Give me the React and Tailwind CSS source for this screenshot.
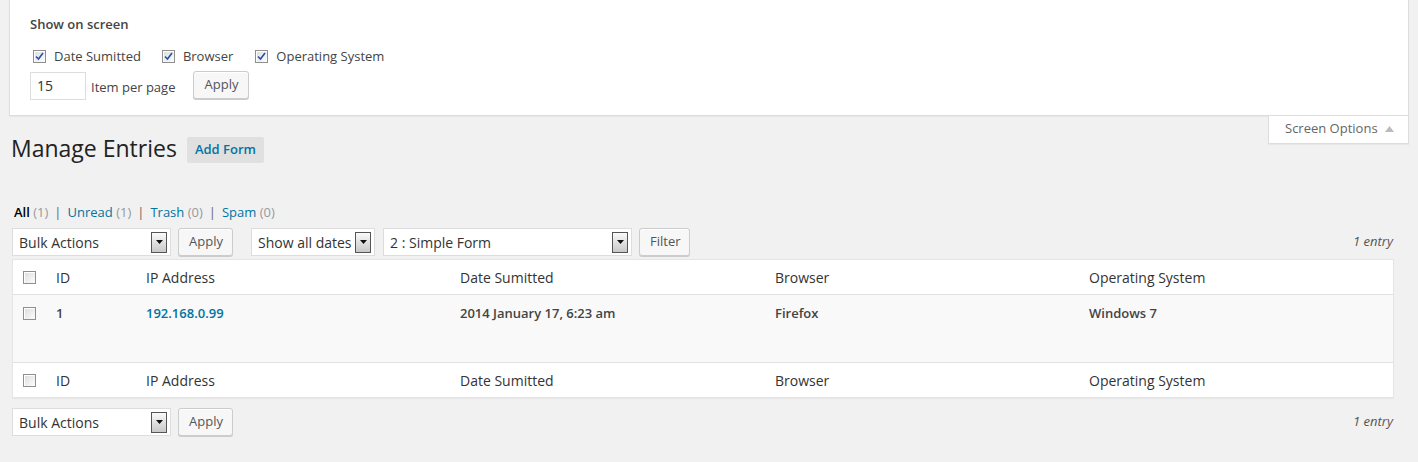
import React from "react";

function Checkbox({ checked }) {
  return (
    <span className="inline-flex h-[13px] w-[13px] shrink-0 items-center justify-center border border-[#8f8f8f] bg-gradient-to-br from-[#dcdcdc] to-[#fdfdfd] shadow-[inset_1px_1px_0_#fff]">
      {checked && (
        <svg width="9" height="9" viewBox="0 0 9 9">
          <path d="M1 4.5 L3.5 7 L8 1" fill="none" stroke="#2a4fa8" strokeWidth="1.6" />
        </svg>
      )}
    </span>
  );
}

function Select({ label, width }) {
  return (
    <div
      className={`flex h-[28px] items-center justify-between border border-[#ddd] bg-white pl-[6px] pr-[3px] text-[14px] text-[#333] ${width}`}
    >
      <span>{label}</span>
      <span className="flex h-[21px] w-[16px] items-center justify-center border border-[#555] bg-gradient-to-b from-[#fafafa] to-[#c8c8c8]">
        <svg width="7" height="4" viewBox="0 0 7 4">
          <path d="M0 0 H7 L3.5 4 Z" fill="#111" />
        </svg>
      </span>
    </div>
  );
}

function Button({ children, className = "" }) {
  return (
    <button
      className={`h-[28px] rounded-[3px] border border-[#ccc] bg-[#f7f7f7] px-[10px] text-[13px] text-[#555] shadow-[0_1px_0_#ccc,inset_0_1px_0_#fff] ${className}`}
    >
      {children}
    </button>
  );
}

function Tablenav({ filters }) {
  return (
    <div className="flex h-[28px] items-center">
      <Select label="Bulk Actions" width="w-[159px]" />
      <Button className="ml-[7px] w-[55px]">Apply</Button>
      {filters && (
        <>
          <Select label="Show all dates" width="ml-[18px] w-[124px]" />
          <Select label="2 : Simple Form" width="ml-[8px] w-[249px]" />
          <Button className="ml-[7px] w-[51px]">Filter</Button>
        </>
      )}
      <span className="ml-auto pr-[1px] text-[13px] italic text-[#555]">1 entry</span>
    </div>
  );
}

const cols = "grid grid-cols-[34px_90px_314px_315px_314px_1fr]";

function HeadRow({ border }) {
  return (
    <div className={`${cols} h-[35px] items-center text-[14px] text-[#333] ${border}`}>
      <div className="flex justify-center pr-[1px]">
        <Checkbox />
      </div>
      <div className="pl-[9px]">ID</div>
      <div className="pl-[9px]">IP Address</div>
      <div className="pl-[9px]">Date Sumitted</div>
      <div className="pl-[9px]">Browser</div>
      <div className="pl-[9px]">Operating System</div>
    </div>
  );
}

export default function App() {
  return (
    <div className="min-h-[462px] bg-[#f1f1f1] font-['Open_Sans',sans-serif] text-[13px] text-[#444]">
      {/* screen options panel */}
      <div className="mx-[9px] border-x border-b border-[#ddd] bg-white pb-[15px] pl-[20px] pt-[14px] shadow-[0_1px_1px_rgba(0,0,0,0.04)]">
        <h5 className="text-[13px] font-semibold leading-[20px] text-[#444]">Show on screen</h5>
        <div className="mt-[13px] flex items-center text-[13px]">
          <label className="flex items-center pl-[3px]">
            <Checkbox checked />
            <span className="ml-[8px]">Date Sumitted</span>
          </label>
          <label className="ml-[21px] flex items-center">
            <Checkbox checked />
            <span className="ml-[8px]">Browser</span>
          </label>
          <label className="ml-[22px] flex items-center">
            <Checkbox checked />
            <span className="ml-[8px]">Operating System</span>
          </label>
        </div>
        <div className="mt-[4px] flex items-center">
          <div className="mt-[1px] flex h-[28px] w-[56px] items-center border border-[#ddd] pl-[6px] text-[14px] text-[#333]">
            15
          </div>
          <span className="ml-[5px] mt-[5px] text-[13px]">Item per page</span>
          <Button className="ml-[18px] w-[56px]">Apply</Button>
        </div>
      </div>

      <div className="flex justify-end pr-[9px]">
        <div className="flex h-[28px] w-[141px] items-center border-x border-b border-[#ddd] bg-white pl-[16px] text-[13px] text-[#666] shadow-[0_1px_1px_rgba(0,0,0,0.04)]">
          Screen Options
          <svg className="ml-[7px]" width="9" height="6" viewBox="0 0 9 6">
            <path d="M0 6 L4.5 0 L9 6 Z" fill="#bbb" />
          </svg>
        </div>
      </div>

      <div className="pl-[12px] pr-[24px]">
        <div className="-mt-[10px] flex items-center">
          <h2 className="-ml-[1px] text-[23px] leading-[29px] text-[#222]">Manage Entries</h2>
          <span className="ml-[10px] mt-[3px] flex h-[26px] items-center rounded-[2px] bg-[#e0e0e0] px-[8px] text-[13px] font-semibold text-[#0074a2]">
            Add Form
          </span>
        </div>

        <ul className="mt-[40px] flex items-center pl-[2px] text-[13px]">
          <li>
            <span className="font-semibold text-black">All</span> <span className="text-[#999]">(1)</span>
            <span className="px-[6px] text-[#666]">|</span>
          </li>
          <li>
            <span className="text-[#0074a2]">Unread</span> <span className="text-[#999]">(1)</span>
            <span className="px-[6px] text-[#666]">|</span>
          </li>
          <li>
            <span className="text-[#0074a2]">Trash</span> <span className="text-[#999]">(0)</span>
            <span className="px-[6px] text-[#666]">|</span>
          </li>
          <li>
            <span className="text-[#0074a2]">Spam</span> <span className="text-[#999]">(0)</span>
          </li>
        </ul>

        <div className="mt-[6px]">
          <Tablenav filters />
        </div>

        <div className="mt-[3px] border border-[#e5e5e5] bg-white shadow-[0_1px_1px_rgba(0,0,0,0.04)]">
          <HeadRow border="border-b border-[#e1e1e1]" />
          <div className={`${cols} h-[67px] items-start bg-[#f9f9f9] pt-[9px] text-[13px] font-semibold text-[#444]`}>
            <div className="flex justify-center pr-[1px] pt-[3px]">
              <Checkbox />
            </div>
            <div className="pl-[9px]">1</div>
            <div className="pl-[9px] text-[#0074a2]">192.168.0.99</div>
            <div className="pl-[9px]">2014 January 17, 6:23 am</div>
            <div className="pl-[9px]">Firefox</div>
            <div className="pl-[9px]">Windows 7</div>
          </div>
          <HeadRow border="border-t border-[#e1e1e1]" />
        </div>

        <div className="mt-[10px]">
          <Tablenav />
        </div>
      </div>
    </div>
  );
}
